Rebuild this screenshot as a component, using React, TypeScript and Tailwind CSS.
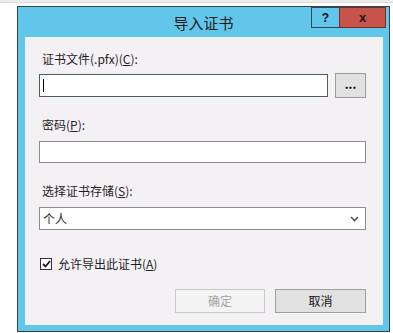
import React from 'react';

const font = { fontFamily: '"Noto Sans CJK SC", "Microsoft YaHei", sans-serif' };

const Label: React.FC<{ text: string; mnemonic: string }> = ({ text, mnemonic }) => (
    <div className="pl-[3px] text-[12px] leading-[14px] text-[#1e1e1e]">
        {text}(<u>{mnemonic}</u>):
    </div>
);

export default function App() {
    return (
        <div className="w-[393px] h-[333px] bg-white overflow-hidden" style={font}>
            {/* background window strip */}
            <div className="h-[3px] bg-[#ececec] border-b border-[#dcdcdc]" />

            {/* Dialog */}
            <div className="ml-[17px] mt-[3px] w-[373px] h-[326px] border border-[#2e4756] bg-[#62c5ea] flex flex-col">
                {/* Title bar */}
                <div className="relative h-[30px] shrink-0 flex items-center justify-center">
                    <span className="text-[15px] text-[#1a1a1a] mt-[2px]">导入证书</span>
                    <div className="absolute top-0 right-[3px] flex h-[21px]">
                        <div className="w-[28px] h-full border border-[#2e4756] border-r-0 flex items-center justify-center text-[12px] font-bold text-[#111]" style={{ fontFamily: '"Liberation Sans", sans-serif' }}>
                            ?
                        </div>
                        <div className="w-[47px] h-full bg-[#c7544b] border border-[#7a2c26] flex items-center justify-center text-[13px] font-bold text-[#1a1a1a]" style={{ fontFamily: '"Liberation Sans", sans-serif' }}>
                            x
                        </div>
                    </div>
                </div>

                {/* Content */}
                <div className="flex-1 ml-[7px] mr-[6px] mb-[6px] bg-[#f4f1f5] pl-[14px] pr-[17px] pt-[15px] flex flex-col">
                    <Label text="证书文件(.pfx)" mnemonic="C" />
                    <div className="mt-[7px] flex items-center gap-[7px]">
                        <div className="flex-1 h-[23px] bg-white border border-[#4e5b66] flex items-center pl-[3px]">
                            <div className="w-px h-[13px] bg-black" />
                        </div>
                        <button className="w-[31px] h-[25px] bg-[#e1e1e1] border border-[#9c9c9c] text-[12px] font-bold leading-none pb-[4px] text-black">
                            ...
                        </button>
                    </div>

                    <div className="mt-[20px]">
                        <Label text="密码" mnemonic="P" />
                    </div>
                    <div className="mt-[9px] h-[22px] bg-white border border-[#8b8b8b]" />

                    <div className="mt-[21px]">
                        <Label text="选择证书存储" mnemonic="S" />
                    </div>
                    <div className="mt-[9px] h-[23px] bg-white border border-[#8b8b8b] flex items-center justify-between pl-[3px] pr-[6px] text-[12px] text-[#1e1e1e]">
                        <span>个人</span>
                        <svg width="9" height="6" viewBox="0 0 9 6">
                            <path d="M1 1 L4.5 4.5 L8 1" fill="none" stroke="#555" strokeWidth="1.6" />
                        </svg>
                    </div>

                    <div className="mt-[27px] flex items-center gap-[6px] pl-[1px]">
                        <div className="w-[12px] h-[12px] bg-white border border-[#333] flex items-center justify-center">
                            <svg width="9" height="8" viewBox="0 0 9 8">
                                <path d="M1 4 L3.5 6.5 L8 1" fill="none" stroke="#1a1a1a" strokeWidth="1.8" />
                            </svg>
                        </div>
                        <span className="text-[12px] text-[#1e1e1e] leading-[14px]">
                            允许导出此证书(<u>A</u>)
                        </span>
                    </div>

                    <div className="mt-[18px] flex justify-end gap-[10px] pr-[0px]">
                        <button className="w-[90px] h-[24px] bg-[#f4f4f4] border border-[#c9c9c9] text-[12px] text-[#a3a3a3]">
                            确定
                        </button>
                        <button className="w-[91px] h-[24px] bg-[#e1e1e1] border border-[#a0a0a0] text-[12px] text-[#111]">
                            取消
                        </button>
                    </div>
                </div>
            </div>
        </div>
    );
}
